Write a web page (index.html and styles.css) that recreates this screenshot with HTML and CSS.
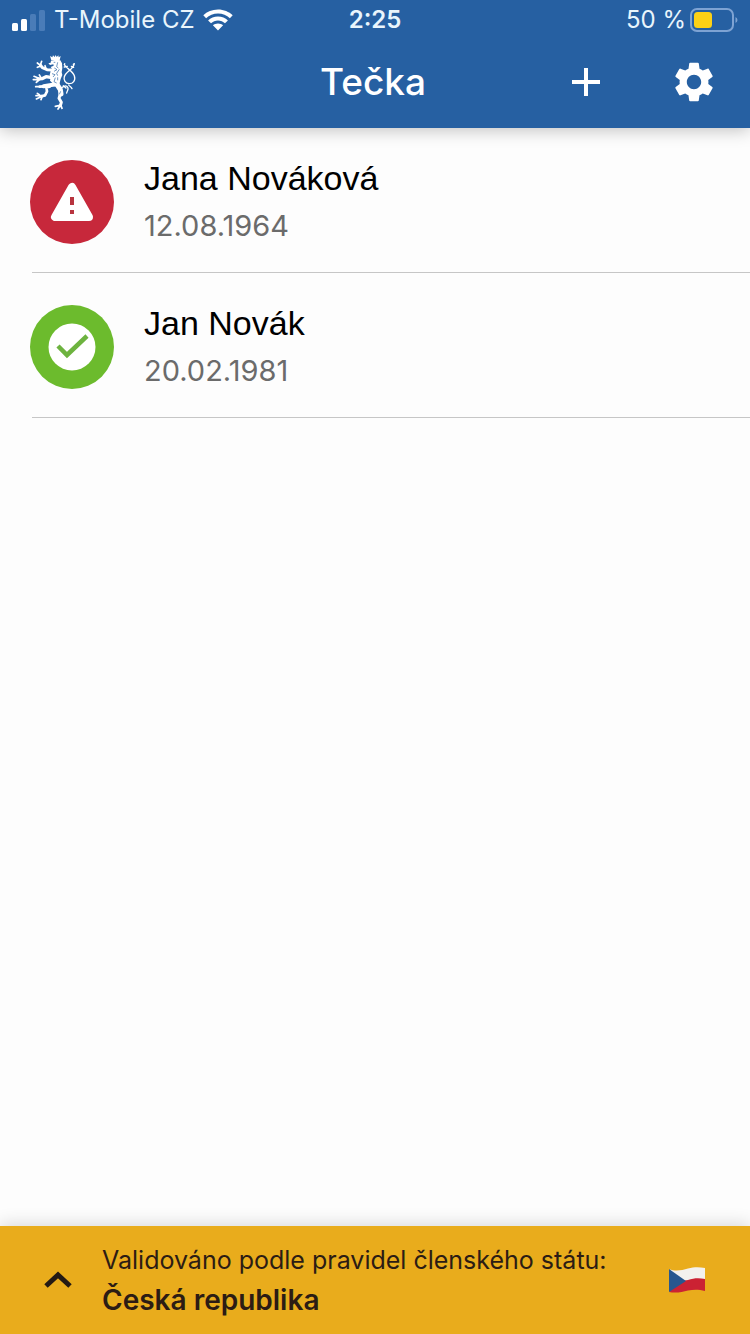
FILE: index.html
```html
<!DOCTYPE html>
<html lang="cs">
<head>
<meta charset="utf-8">
<meta name="viewport" content="width=device-width, initial-scale=1">
<title>Tečka</title>
<link rel="stylesheet" href="styles.css">
</head>
<body>
<div class="app">
  <header class="header">
    <div class="status">
      <div class="status-side">
        <svg class="signal" viewBox="0 0 34 22" aria-hidden="true">
          <rect x="0" y="14" width="6" height="8" rx="1.5" fill="#fff"/>
          <rect x="9" y="10" width="6" height="12" rx="1.5" fill="#fff"/>
          <rect x="18" y="5" width="6" height="17" rx="1.5" fill="#4a7cb8"/>
          <rect x="27" y="1" width="6" height="21" rx="1.5" fill="#4a7cb8"/>
        </svg>
        <span class="carrier">T-Mobile CZ</span>
        <svg class="wifi" viewBox="0 0 30 22" aria-hidden="true">
          <path fill="#fff" d="M15 0.500C20.800 0.500 26 2.700 29.700 6.300L26.900 9.200C23.800 6.200 19.600 4.500 15 4.500S6.200 6.200 3.100 9.200L.3 6.300C4 2.700 9.200.5 15 .5ZM15 7.500C18.900 7.500 22.400 9 24.900 11.400L22 14.300C20.200 12.500 17.700 11.400 15 11.400S9.800 12.500 8 14.300L5.100 11.400C7.600 9 11.100 7.500 15 7.500ZM15 14.400C17 14.400 18.800 15.100 20.100 16.300L15 21.500 9.900 16.300C11.200 15.100 13 14.400 15 14.400Z"/>
        </svg>
      </div>
      <time class="clock">2:25</time>
      <div class="status-side status-end">
        <span class="percent">50 %</span>
        <svg class="battery" viewBox="0 0 48 24" aria-hidden="true">
          <rect x="1" y="1" width="42" height="22" rx="6" fill="none" stroke="#7ea3d3" stroke-width="2"/>
          <rect x="4" y="4" width="18" height="16" rx="3.500" fill="#fcd116"/>
          <path d="M45.500 9v6q2-1 2-3t-2-3Z" fill="#7ea3d3"/>
        </svg>
      </div>
    </div>
    <div class="toolbar">
      <svg class="lion" viewBox="93 165 138 168" role="img" aria-label="Český lev">
        <g fill="#fff">
          <path d="M147 171l7 4 2-6 5 5 3-6 3 6 5-5 1 6 6-4-3 13h-25Z"/>
          <path d="M150 185l14-3 14 2 5 9 1 14-2 13 2 8-5 12-3 12-2 9-14 1-5-9-8-8 2-11-3-6 3-12 4-7-4-5 9-4-1-4-10 2-5-5 7-2Z"/>
        </g>
        <g fill="none" stroke="#fff" stroke-linecap="round" stroke-linejoin="round">
          <path stroke-width="9" d="M155 213l-17-1-14-6-6-8"/>
          <path stroke-width="5" d="M118 199l-9-7M119 196l3-9M118 202l-9 3M135 209l-3-9"/>
          <path stroke-width="10" d="M153 236l-18-3-12 6-12 1"/>
          <path stroke-width="5" d="M112 237l-13-5M110 241l-13 1M114 243l-8 7M120 236l-5-8"/>
          <path stroke-width="12" d="M166 256l-20 3-18 3"/>
          <path stroke-width="8" d="M146 263l-10 2 2 12-6 12-12 3M128 262l-12 1"/>
          <path stroke-width="5" d="M121 290l-16 0M120 293l-14 7M123 294l-3 8M115 287l-6-4M116 263l-12 0"/>
          <path stroke-width="15" d="M168 256l10 16 2 13"/>
          <path stroke-width="9" d="M178 284l-4 14 7 12-3 10"/>
          <path stroke-width="5" d="M177 319l-14 3M177 321l-6 9M180 320l3 8"/>
          <path stroke-width="4" d="M190 197l1-3M190 196c3 10 25 20 30 34 5 15-5 24-15 24-12 0-18-11-15-21 5-15 27-22 30-39l-3 2M190 204l9-2M218 205l-7-3"/>
          <path stroke-width="4" d="M182 266c10-6 16-8 19 1 1 7-3 9-4 15M203 258c3 5 8 5 10 11M187 260l8 7"/>
        </g>
        <g fill="none" stroke="#2660a2" stroke-width="2">
          <path d="M158 190h5M170 190l-3 13 5 4M160 207l8 5-9 5M175 211l-8 12 3 7M153 224l9 3-6 7M163 236l-4 12 8 4M170 235v9M179 277l-4 9"/>
        </g>
      </svg>
      <h1 class="title">Tečka</h1>
      <div class="actions">
        <button class="icon-button" type="button" aria-label="Přidat">
          <svg class="plus" viewBox="0 0 28 28" aria-hidden="true"><path d="M14 0v28M0 14h28" stroke="#fff" stroke-width="4"/></svg>
        </button>
        <button class="icon-button" type="button" aria-label="Nastavení">
          <svg class="gear" viewBox="2 2 20 20" aria-hidden="true"><path fill="#fff" d="M19.140 12.940c.04-.3.060-.61.060-.94 0-.32-.02-.64-.07-.94l2.030-1.580c.18-.14.230-.41.120-.61l-1.920-3.320c-.12-.22-.37-.29-.59-.22l-2.390.96c-.5-.38-1.030-.7-1.620-.94l-.36-2.540c-.04-.24-.24-.41-.48-.41h-3.840c-.24 0-.43.170-.47.410l-.36 2.540c-.59.240-1.130.570-1.620.94l-2.390-.96c-.22-.08-.47 0-.59.220L2.740 8.870c-.12.210-.08.470.120.610l2.030 1.580c-.05.300-.09.630-.09.940s.02.640.070.94l-2.030 1.580c-.18.140-.23.410-.12.610l1.920 3.320c.12.220.370.290.590.220l2.390-.96c.5.380 1.030.700 1.620.940l.36 2.540c.05.240.240.410.480.410h3.840c.24 0 .44-.17.470-.41l.36-2.540c.59-.24 1.130-.56 1.620-.94l2.390.96c.22.080.470 0 .59-.22l1.920-3.320c.12-.22.070-.47-.12-.61l-2.010-1.580ZM12 15.600c-1.980 0-3.600-1.620-3.600-3.600s1.620-3.600 3.600-3.600 3.600 1.620 3.600 3.600-1.620 3.600-3.600 3.600Z"/></svg>
        </button>
      </div>
    </div>
  </header>

  <main class="content">
    <ul class="people">
      <li class="person">
        <svg class="badge" viewBox="0 0 84 84" role="img" aria-label="Neplatné">
          <circle cx="42" cy="42" r="42" fill="#c7283b"/>
          <path d="M42 27L25 57H59Z" fill="#fff" stroke="#fff" stroke-width="8" stroke-linejoin="round"/>
          <path d="M40 37h4v8h-4ZM40 50h4v4h-4Z" fill="#b8343f"/>
        </svg>
        <div class="person-text">
          <h2 class="name">Jana Nováková</h2>
          <p class="born">12.08.1964</p>
        </div>
      </li>
      <li class="person">
        <svg class="badge" viewBox="0 0 84 84" role="img" aria-label="Platné">
          <circle cx="42" cy="42" r="42" fill="#6cbb2d"/>
          <circle cx="42" cy="42" r="23.500" fill="#fff"/>
          <path d="M28 41l9 9 20-19" fill="none" stroke="#6db33f" stroke-width="4.500"/>
        </svg>
        <div class="person-text">
          <h2 class="name">Jan Novák</h2>
          <p class="born">20.02.1981</p>
        </div>
      </li>
    </ul>
  </main>

  <footer class="footer">
    <button class="icon-button" type="button" aria-label="Rozbalit">
      <svg class="chevron" viewBox="0 0 28 18" aria-hidden="true"><path d="M2 15L14 4l12 11" fill="none" stroke="#241a14" stroke-width="5"/></svg>
    </button>
    <div class="rules">
      <p class="rules-label">Validováno podle pravidel členského státu:</p>
      <p class="rules-country">Česká republika</p>
    </div>
    <svg class="flag" viewBox="0 0 36 26" role="img" aria-label="Vlajka České republiky">
      <path d="M0 2C7 5 13 3 19 1.500 25 0 30 0 36 1v12L12 15Z" fill="#f3f1ee"/>
      <path d="M0 25c7 1.500 13 0 19-1.500 6-1 11-1 17 .5V12c-6-1-11-1-17 1l-7 1Z" fill="#cb2233"/>
      <path d="M0 2l17 12L0 25Z" fill="#27578f"/>
    </svg>
  </footer>
</div>
</body>
</html>
```

FILE: styles.css
```css
* {
  box-sizing: border-box;
}

body,
h1,
h2,
p,
ul {
  margin: 0;
  padding: 0;
}

body {
  background: #fdfdfd;
  font-family: Inter, Roboto, sans-serif;
}

svg {
  display: block;
  flex: none;
}

.app {
  display: flex;
  flex-direction: column;
  min-height: 100vh;
}

.header {
  background: #2660a2;
  color: #fff;
  box-shadow: 0 2px 16px rgba(0, 0, 0, 0.25);
}

.status {
  display: grid;
  grid-template-columns: 1fr auto 1fr;
  align-items: center;
  height: 40px;
  padding: 0 12px;
  font-size: 24px;
  line-height: 32px;
  color: #e9f5fc;
}

.status-side {
  display: flex;
  align-items: center;
  gap: 8px;
}

.status-end {
  justify-content: flex-end;
  gap: 4px;
}

.signal {
  width: 34px;
  height: 22px;
}

.wifi {
  width: 30px;
  height: 22px;
}

.battery {
  width: 48px;
  height: 24px;
}

.clock {
  font-weight: 600;
}

.toolbar {
  display: grid;
  grid-template-columns: 1fr auto 1fr;
  align-items: center;
  height: 88px;
  padding: 0 36px 4px 32px;
}

.lion {
  width: 46px;
  height: 56px;
}

.title {
  font-size: 37px;
  font-weight: 500;
  line-height: 48px;
}

.actions {
  display: flex;
  justify-content: flex-end;
  align-items: center;
  gap: 74px;
}

.icon-button {
  display: flex;
  padding: 0;
  border: 0;
  background: none;
  cursor: pointer;
}

.plus {
  width: 28px;
  height: 28px;
}

.gear {
  width: 40px;
  height: 40px;
}

.content {
  flex: 1;
}

.people {
  list-style: none;
}

.person {
  display: grid;
  grid-template-columns: auto 1fr;
  align-items: center;
  column-gap: 30px;
  height: 145px;
  padding: 2px 0 0 30px;
  background: linear-gradient(#c6c6c6, #c6c6c6) 32px 100% / 100% 1px no-repeat;
}

.badge {
  width: 84px;
  height: 84px;
}

.name {
  font-family: "Liberation Sans", Arial, sans-serif;
  font-size: 34px;
  font-weight: 400;
  line-height: 48px;
  color: #000;
}

.born {
  font-size: 29px;
  line-height: 48px;
  color: #6b6b6b;
}

.footer {
  display: flex;
  align-items: center;
  height: 108px;
  padding: 0 45px 0 44px;
  background: #e9ac1c;
  color: #2c1c14;
  box-shadow: 0 -2px 16px rgba(0, 0, 0, 0.15);
}

.chevron {
  width: 28px;
  height: 18px;
}

.rules {
  flex: 1;
  margin-left: 30px;
}

.rules-label {
  font-size: 25px;
  line-height: 40px;
}

.rules-country {
  font-size: 28px;
  font-weight: 600;
  line-height: 40px;
}

.flag {
  width: 36px;
  height: 26px;
}
```
